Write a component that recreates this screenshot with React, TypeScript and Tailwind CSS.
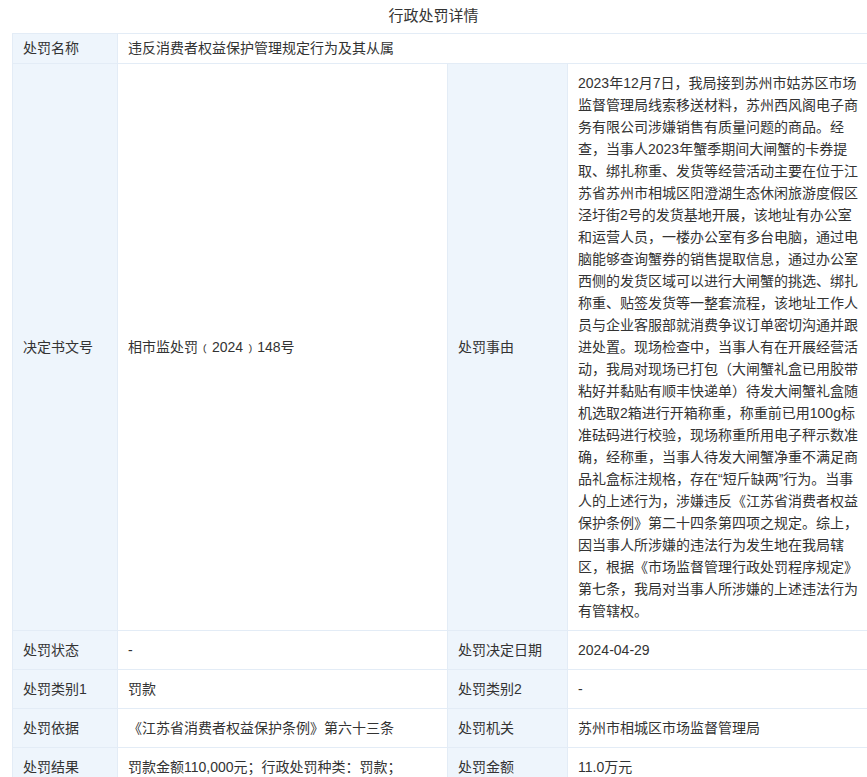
const lines = [
"2023年12月7日，我局接到苏州市姑苏区市场",
"监督管理局线索移送材料，苏州西风阁电子商",
"务有限公司涉嫌销售有质量问题的商品。经",
"查，当事人2023年蟹季期间大闸蟹的卡券提",
"取、绑扎称重、发货等经营活动主要在位于江",
"苏省苏州市相城区阳澄湖生态休闲旅游度假区",
"泾圩街2号的发货基地开展，该地址有办公室",
"和运营人员，一楼办公室有多台电脑，通过电",
"脑能够查询蟹券的销售提取信息，通过办公室",
"西侧的发货区域可以进行大闸蟹的挑选、绑扎",
"称重、贴签发货等一整套流程，该地址工作人",
"员与企业客服部就消费争议订单密切沟通并跟",
"进处置。现场检查中，当事人有在开展经营活",
"动，我局对现场已打包（大闸蟹礼盒已用胶带",
"粘好并黏贴有顺丰快递单）待发大闸蟹礼盒随",
"机选取2箱进行开箱称重，称重前已用100g标",
"准砝码进行校验，现场称重所用电子秤示数准",
"确，经称重，当事人待发大闸蟹净重不满足商",
"品礼盒标注规格，存在“短斤缺两”行为。当事",
"人的上述行为，涉嫌违反《江苏省消费者权益",
"保护条例》第二十四条第四项之规定。综上，",
"因当事人所涉嫌的违法行为发生地在我局辖",
"区，根据《市场监督管理行政处罚程序规定》",
"第七条，我局对当事人所涉嫌的上述违法行为",
"有管辖权。",
];

const L = "bg-[#eef5fc] border border-[#e3ecf6] px-[10px] align-middle";
const V = "bg-white border border-[#e3ecf6] px-[10px] align-middle";

export default function App() {
  return (
    <div className="w-[867px] h-[777px] overflow-hidden bg-white text-[14px] text-[#333]" style={{ fontFamily: '"Liberation Sans","Noto Sans CJK SC",sans-serif' }}>
      <div className="h-[33px] flex items-center justify-center text-[15px] text-[#333]">行政处罚详情</div>
      <table className="ml-[12px] border-collapse table-fixed w-[1000px]">
        <colgroup>
          <col className="w-[105px]" />
          <col className="w-[330px]" />
          <col className="w-[120px]" />
          <col className="w-[445px]" />
        </colgroup>
        <tbody>
          <tr className="h-[30px]">
            <td className={L}>处罚名称</td>
            <td className={V} colSpan={3}>违反消费者权益保护管理规定行为及其从属</td>
          </tr>
          <tr>
            <td className={L}>决定书文号</td>
            <td className={V}>相市监处罚﹙2024﹚148号</td>
            <td className={L}>处罚事由</td>
            <td className={V + " py-[8px] leading-[22px]"}>
              {lines.map((l, i) => <div key={i} className="whitespace-nowrap">{l}</div>)}
            </td>
          </tr>
          <tr className="h-[39px]">
            <td className={L}>处罚状态</td>
            <td className={V}>-</td>
            <td className={L}>处罚决定日期</td>
            <td className={V}>2024-04-29</td>
          </tr>
          <tr className="h-[39px]">
            <td className={L}>处罚类别1</td>
            <td className={V}>罚款</td>
            <td className={L}>处罚类别2</td>
            <td className={V}>-</td>
          </tr>
          <tr className="h-[39px]">
            <td className={L}>处罚依据</td>
            <td className={V}>《江苏省消费者权益保护条例》第六十三条</td>
            <td className={L}>处罚机关</td>
            <td className={V}>苏州市相城区市场监督管理局</td>
          </tr>
          <tr className="h-[39px]">
            <td className={L}>处罚结果</td>
            <td className={V}>罚款金额110,000元；行政处罚种类：罚款；</td>
            <td className={L}>处罚金额</td>
            <td className={V}>11.0万元</td>
          </tr>
        </tbody>
      </table>
    </div>
  );
}
